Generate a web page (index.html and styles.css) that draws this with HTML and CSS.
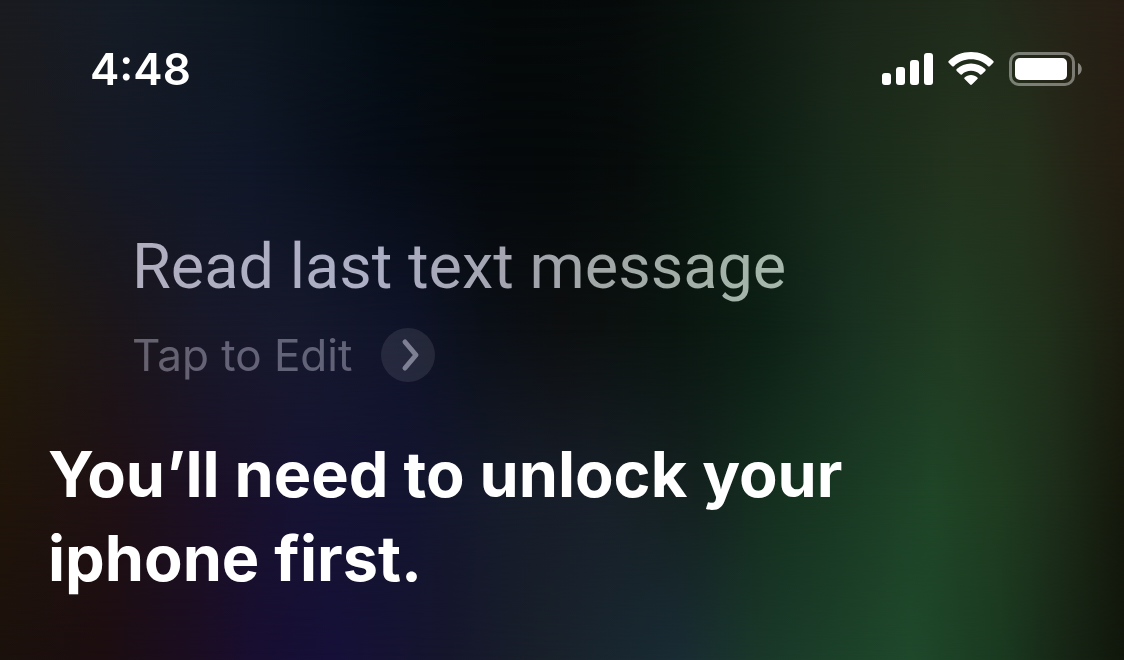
FILE: index.html
```html
<!DOCTYPE html>
<html lang="en">
<head>
<meta charset="utf-8">
<meta name="viewport" content="width=device-width, initial-scale=1">
<title>Assistant</title>
<link rel="stylesheet" href="styles.css">
</head>
<body>
<div class="backdrop" aria-hidden="true">
  <div class="glow glow-1"></div>
  <div class="glow glow-2"></div>
  <div class="glow glow-3"></div>
  <div class="glow glow-4"></div>
  <div class="glow glow-5"></div>
</div>
<div class="screen">
  <header class="status">
    <time class="clock">4:48</time>
    <div class="indicators">
      <svg class="signal" width="51" height="34" viewBox="0 0 51 34" fill="#fff" role="img" aria-label="Signal">
        <rect x="0" y="21" width="9" height="12" rx="3"/>
        <rect x="14" y="15" width="9" height="18" rx="3"/>
        <rect x="28" y="8" width="9" height="25" rx="3"/>
        <rect x="42" y="1" width="9" height="32" rx="3"/>
      </svg>
      <svg class="wifi" width="46" height="34" viewBox="0 0 46 34" fill="#fff" role="img" aria-label="Wi-Fi">
        <path d="M23 0C31.700 0 39.700 3.300 45.300 8.900Q46.100 9.800 45.300 10.700L41.800 14.200Q41 15 40.100 14.200C35.600 9.900 29.600 7.300 23 7.300S10.400 9.900 5.900 14.200Q5 15 4.200 14.200L.7 10.700Q-.1 9.800 .7 8.900C6.300 3.300 14.300 0 23 0Z"/>
        <path d="M23 11.500C28.500 11.500 33.500 13.600 37.300 17.100Q38.200 18 37.300 18.900L33.800 22.300Q33 23.100 32.100 22.400C29.700 20.200 26.500 18.800 23 18.800S16.300 20.200 13.900 22.400Q13 23.100 12.200 22.300L8.700 18.900Q7.800 18 8.700 17.100C12.500 13.600 17.500 11.500 23 11.500Z"/>
        <path d="M23 23C25.500 23 27.700 23.900 29.400 25.400Q30.300 26.200 29.400 27.100L23.900 32.500Q23 33.400 22.100 32.500L16.600 27.100Q15.700 26.200 16.600 25.400C18.300 23.900 20.500 23 23 23Z"/>
      </svg>
      <svg class="battery" width="75" height="34" viewBox="0 0 75 34" role="img" aria-label="Battery full">
        <rect x="1.500" y="1.500" width="63" height="31" rx="8.500" fill="none" stroke="#fff" stroke-opacity=".4" stroke-width="3"/>
        <rect x="6" y="6" width="52" height="22" rx="5" fill="#fff"/>
        <path d="M69 11C74 13 74 21 69 23Z" fill="#fff" fill-opacity=".45"/>
      </svg>
    </div>
  </header>
  <main>
    <section class="request">
      <p class="query"><span class="tint">Read last text message</span></p>
      <button class="edit" type="button">
        <span>Tap to Edit</span>
        <span class="disc">
          <svg width="54" height="54" viewBox="0 0 54 54" fill="none" stroke="currentColor" stroke-width="5" stroke-linecap="round" stroke-linejoin="round" aria-hidden="true"><path d="M24 14L35 27L24 40"/></svg>
        </span>
      </button>
    </section>
    <h1 class="answer">You’ll need to unlock your iphone first.</h1>
  </main>
</div>
</body>
</html>
```
FILE: styles.css
```css
* {
  box-sizing: border-box;
  margin: 0;
}

body {
  min-height: 100vh;
  background: #05090a;
  color: #fff;
  font-family: Inter, "Liberation Sans", sans-serif;
}

.backdrop {
  position: fixed;
  inset: 0;
}

/* Colour bands that fade into one another from top to bottom */
.glow {
  position: absolute;
  inset: 0;
}

.glow-1 {
  background: linear-gradient(to right, #1a1b20 0%, #151c26 11%, #0e1720 22%, #040d13 34%, #050909 45%, #060a0a 54%, #0b140f 63%, #1a2519 75%, #212c1c 87%, #262217 95%, #261e15 100%);
}

.glow-2 {
  background: linear-gradient(to right, #1b1a1a 0%, #151926 11%, #101728 22%, #070d17 34%, #05090c 44%, #05090a 50%, #070c0b 56%, #09180f 64%, #17291a 74%, #22321d 85%, #24311c 91%, #242416 96%, #241d12 100%);
  mask-image: linear-gradient(transparent 0%, #000 25%);
}

.glow-3 {
  background: linear-gradient(to right, #221b0b 0%, #1c161a 10%, #181829 18%, #16192d 27%, #10142a 36%, #0b1018 43%, #0d0f10 50%, #0a1510 60%, #0d2015 68%, #183020 76%, #213b22 85%, #20301b 93%, #1c1c10 100%);
  mask-image: linear-gradient(transparent 25%, #000 50%);
}

.glow-4 {
  background: linear-gradient(to right, #20150a 0%, #1f1016 11%, #1b1025 18%, #161333 27%, #131430 36%, #161c2a 45%, #181f29 53%, #14221f 62%, #15301f 69%, #1a3a24 76%, #1f4527 83%, #1f3b20 89%, #1d2d1a 94%, #15180c 100%);
  mask-image: linear-gradient(transparent 50%, #000 75%);
}

.glow-5 {
  background: linear-gradient(to right, #1b110c 0%, #1c0d10 9%, #1b0d24 18%, #180e32 23%, #151038 30%, #15162c 40%, #18202a 48%, #192b34 60%, #1a3829 68%, #1c4129 75%, #1f482b 81%, #1a3a20 89%, #172817 94%, #10160b 100%);
  mask-image: linear-gradient(transparent 75%, #000 100%);
}

.screen {
  position: relative;
  padding: 39px 40px 56px 48px;
}

.status {
  display: flex;
  align-items: center;
  justify-content: space-between;
  padding-left: 42px;
}

.clock {
  font-size: 44px;
  font-weight: 600;
  line-height: 60px;
}

.indicators {
  display: flex;
  align-items: center;
  gap: 15px;
}

.request {
  padding: 128px 0 0 84px;
}

.query {
  font-family: Roboto, Inter, sans-serif;
  font-size: 63px;
  line-height: 80px;
}

.tint {
  background: linear-gradient(to right, #b0aebf 0%, #adafc6 35%, #a2a3ac 60%, #a1a8a6 75%, #a5b8ab 100%);
  background-clip: text;
  color: transparent;
}

.edit {
  display: flex;
  align-items: center;
  gap: 29px;
  margin-top: 21px;
  padding: 0;
  border: 0;
  background: none;
  color: rgba(236, 232, 255, 0.36);
  font: inherit;
  font-size: 44px;
  line-height: 54px;
  cursor: pointer;
}

.disc {
  display: flex;
  border-radius: 50%;
  background: rgba(255, 255, 255, 0.09);
  color: rgba(236, 236, 255, 0.45);
}

.answer {
  max-width: 860px;
  padding-top: 50px;
  font-size: 63px;
  font-weight: 700;
  line-height: 84px;
}
```
